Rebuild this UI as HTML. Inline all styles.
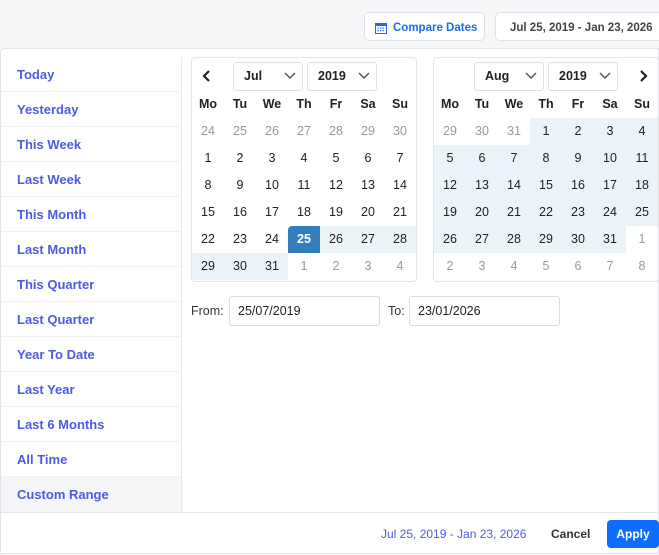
<!DOCTYPE html>
<html><head><style>
*{box-sizing:border-box;margin:0;padding:0}
body{width:659px;height:554px;overflow:hidden;background:#f6f7f9;font-family:"Liberation Sans",Arial,sans-serif;position:relative}
.abs{position:absolute}
.btn{position:absolute;top:12px;height:29px;border:1px solid #dfe2e6;border-radius:5px;background:#fff;font-size:11.5px;font-weight:bold;display:flex;align-items:center;padding-top:2px}
.panel{position:absolute;left:0;top:48px;width:659px;height:506px;background:#fff;border:1px solid #e2e4e8;border-radius:4px 0 0 0}
.side{position:absolute;left:0;top:8px;width:181px;height:455px;border-right:1px solid #e6e8eb}
.item{height:35px;line-height:35px;padding-left:16px;font-size:13px;font-weight:bold;color:#4d5ae6;border-bottom:1px solid #f0f1f3}
.item.act{background:#f5f6f8;border-bottom:none}
.cal{position:absolute;top:8px;width:226px;height:225px;border:1px solid #e3e5e8;border-radius:4px;background:#fff}
.sel{position:absolute;top:4px;height:29px;border:1px solid #dcdfe3;border-radius:3px;font-size:12.5px;font-weight:bold;color:#222;padding-left:10px;line-height:27px}
.sel svg{position:absolute;right:6px;top:9px}
.grid{position:absolute;left:0;top:33px;display:grid;grid-template-columns:repeat(7,32px);grid-auto-rows:27px;font-size:12.5px}
.grid div{text-align:center;line-height:27px;color:#222}
.grid .h{font-weight:bold}
.grid .o{color:#999}
.grid .r{background:#ebf4f8}
.grid .s{background:#357ebd;color:#fff;font-weight:bold;border-radius:4px 0 0 0}
.inp{position:absolute;top:247px;height:30px;border:1px solid #d9dce0;border-radius:3px;font-size:12.5px;line-height:28px;padding-left:8px;color:#222}
</style></head><body>
<div class="btn" style="left:364px;width:121px;color:#1a6ee8;padding-left:10px">
<svg width="12" height="12" viewBox="0 0 12 12" style="margin-right:6px"><rect x="0.5" y="1.5" width="11" height="10" fill="none" stroke="#1a6ee8"/><rect x="0.5" y="1.5" width="11" height="2.5" fill="#1a6ee8"/><g fill="#1a6ee8"><rect x="2.5" y="5.5" width="1.3" height="1.3"/><rect x="5" y="5.5" width="1.3" height="1.3"/><rect x="7.5" y="5.5" width="1.3" height="1.3"/><rect x="2.5" y="8" width="1.3" height="1.3"/><rect x="5" y="8" width="1.3" height="1.3"/><rect x="7.5" y="8" width="1.3" height="1.3"/></g></svg>Compare Dates</div>
<div class="btn" style="left:495px;width:170px;color:#444;padding-left:14px">Jul 25, 2019 - Jan 23, 2026</div>
<div class="panel">
<div class="side">
<div class="item">Today</div><div class="item">Yesterday</div><div class="item">This Week</div><div class="item">Last Week</div><div class="item">This Month</div><div class="item">Last Month</div><div class="item">This Quarter</div><div class="item">Last Quarter</div><div class="item">Year To Date</div><div class="item">Last Year</div><div class="item">Last 6 Months</div><div class="item">All Time</div><div class="item act">Custom Range</div>
</div>
<div class="cal" style="left:190px">
<svg class="abs" style="left:10px;top:11px" width="10" height="14" viewBox="0 0 10 14"><path d="M7 2L2 7l5 5" fill="none" stroke="#222" stroke-width="2.2"/></svg>
<div class="sel" style="left:41px;width:70px">Jul<svg width="12" height="8" viewBox="0 0 12 8"><path d="M1 1l5 5 5-5" fill="none" stroke="#555" stroke-width="1.5"/></svg></div>
<div class="sel" style="left:115px;width:70px">2019<svg width="12" height="8" viewBox="0 0 12 8"><path d="M1 1l5 5 5-5" fill="none" stroke="#555" stroke-width="1.5"/></svg></div>
<div class="grid">
<div class="h">Mo</div><div class="h">Tu</div><div class="h">We</div><div class="h">Th</div><div class="h">Fr</div><div class="h">Sa</div><div class="h">Su</div>
<div class="o">24</div><div class="o">25</div><div class="o">26</div><div class="o">27</div><div class="o">28</div><div class="o">29</div><div class="o">30</div>
<div>1</div><div>2</div><div>3</div><div>4</div><div>5</div><div>6</div><div>7</div>
<div>8</div><div>9</div><div>10</div><div>11</div><div>12</div><div>13</div><div>14</div>
<div>15</div><div>16</div><div>17</div><div>18</div><div>19</div><div>20</div><div>21</div>
<div>22</div><div>23</div><div>24</div><div class="s">25</div><div class="r">26</div><div class="r">27</div><div class="r">28</div>
<div class="r">29</div><div class="r">30</div><div class="r">31</div><div class="o">1</div><div class="o">2</div><div class="o">3</div><div class="o">4</div>
</div></div>
<div class="cal" style="left:432px">
<div class="sel" style="left:40px;width:70px">Aug<svg width="12" height="8" viewBox="0 0 12 8"><path d="M1 1l5 5 5-5" fill="none" stroke="#555" stroke-width="1.5"/></svg></div>
<div class="sel" style="left:114px;width:70px">2019<svg width="12" height="8" viewBox="0 0 12 8"><path d="M1 1l5 5 5-5" fill="none" stroke="#555" stroke-width="1.5"/></svg></div>
<svg class="abs" style="left:204px;top:11px" width="10" height="14" viewBox="0 0 10 14"><path d="M3 2l5 5-5 5" fill="none" stroke="#222" stroke-width="2.2"/></svg>
<div class="grid">
<div class="h">Mo</div><div class="h">Tu</div><div class="h">We</div><div class="h">Th</div><div class="h">Fr</div><div class="h">Sa</div><div class="h">Su</div>
<div class="o">29</div><div class="o">30</div><div class="o">31</div><div class="r">1</div><div class="r">2</div><div class="r">3</div><div class="r">4</div>
<div class="r">5</div><div class="r">6</div><div class="r">7</div><div class="r">8</div><div class="r">9</div><div class="r">10</div><div class="r">11</div>
<div class="r">12</div><div class="r">13</div><div class="r">14</div><div class="r">15</div><div class="r">16</div><div class="r">17</div><div class="r">18</div>
<div class="r">19</div><div class="r">20</div><div class="r">21</div><div class="r">22</div><div class="r">23</div><div class="r">24</div><div class="r">25</div>
<div class="r">26</div><div class="r">27</div><div class="r">28</div><div class="r">29</div><div class="r">30</div><div class="r">31</div><div class="o">1</div>
<div class="o">2</div><div class="o">3</div><div class="o">4</div><div class="o">5</div><div class="o">6</div><div class="o">7</div><div class="o">8</div>
</div></div>
<div class="abs" style="left:190px;top:255px;font-size:12.5px;color:#333">From:</div>
<div class="inp" style="left:228px;width:151px">25/07/2019</div>
<div class="abs" style="left:387px;top:255px;font-size:12.5px;color:#333">To:</div>
<div class="inp" style="left:408px;width:151px">23/01/2026</div>
<div class="abs" style="left:0;top:463px;width:659px;border-top:1px solid #e3e5e8;height:43px"></div>
<div class="abs" style="left:380px;top:478px;font-size:12px;color:#4d5ae6">Jul 25, 2019 - Jan 23, 2026</div>
<div class="abs" style="left:550px;top:478px;font-size:12px;font-weight:bold;color:#333">Cancel</div>
<div class="abs" style="left:606px;top:471px;width:52px;height:28px;background:#0d6efd;border-radius:4px;color:#fff;font-size:12px;font-weight:bold;text-align:center;line-height:28px">Apply</div>
</div>
</body></html>
